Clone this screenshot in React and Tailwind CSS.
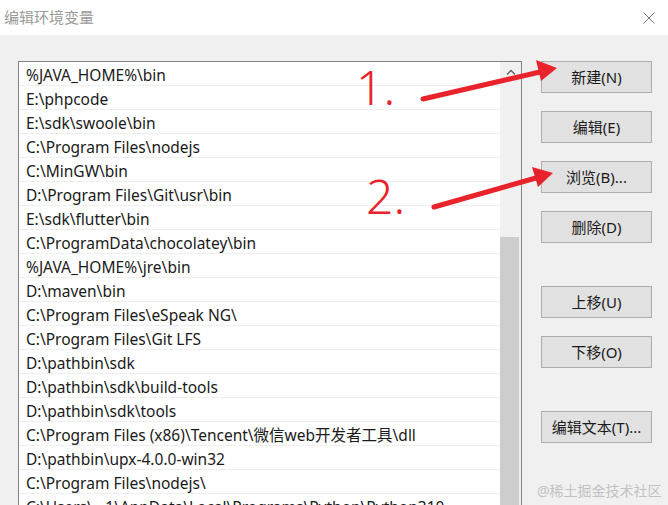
import React from "react";

const paths = [
    "%JAVA_HOME%\\bin",
    "E:\\phpcode",
    "E:\\sdk\\swoole\\bin",
    "C:\\Program Files\\nodejs",
    "C:\\MinGW\\bin",
    "D:\\Program Files\\Git\\usr\\bin",
    "E:\\sdk\\flutter\\bin",
    "C:\\ProgramData\\chocolatey\\bin",
    "%JAVA_HOME%\\jre\\bin",
    "D:\\maven\\bin",
    "C:\\Program Files\\eSpeak NG\\",
    "C:\\Program Files\\Git LFS",
    "D:\\pathbin\\sdk",
    "D:\\pathbin\\sdk\\build-tools",
    "D:\\pathbin\\sdk\\tools",
    "C:\\Program Files (x86)\\Tencent\\微信web开发者工具\\dll",
    "D:\\pathbin\\upx-4.0.0-win32",
    "C:\\Program Files\\nodejs\\",
    "C:\\Users\\...1\\AppData\\Local\\Programs\\Python\\Python310",
];

// buttons with their top margin (gap above each)
const buttons = [
    { label: "新建(N)", mt: "mt-0" },
    { label: "编辑(E)", mt: "mt-[18px]" },
    { label: "浏览(B)...", mt: "mt-[18px]" },
    { label: "删除(D)", mt: "mt-[18px]" },
    { label: "上移(U)", mt: "mt-[43px]" },
    { label: "下移(O)", mt: "mt-[18px]" },
    { label: "编辑文本(T)...", mt: "mt-[43px]" },
];

const font = { fontFamily: '"Noto Sans", "Noto Sans CJK SC", sans-serif' };

const WinButton = ({ label, mt }) => (
    <button
        className={`${mt} w-[111px] h-[32px] bg-[#e1e1e1] border border-[#adadad] text-[15px] text-[#1a1a1a] flex items-center justify-center leading-none`}
    >
        {label}
    </button>
);

const App = () => {
    return (
        <div className="relative w-[668px] h-[505px] overflow-hidden bg-[#f0f0f0]" style={font}>
            {/* title bar */}
            <div className="h-[35px] bg-white flex items-center justify-between pl-[4px] pr-[13px]">
                <span className="text-[15px] text-[#9a9a9a] leading-none">编辑环境变量</span>
                <svg width="12" height="12" viewBox="0 0 12 12">
                    <path d="M0.5 0.5 L11.5 11.5 M11.5 0.5 L0.5 11.5" stroke="#7a7a7a" strokeWidth="1" fill="none" />
                </svg>
            </div>

            <div className="flex pl-[18px] pt-[26px]">
                {/* list box */}
                <div className="w-[504px] border border-[#828282] bg-white flex">
                    <div className="w-[481px]">
                        {paths.map((p, i) => (
                            <div
                                key={i}
                                className="h-[24px] border-b border-[#efefef] pl-[7px] pt-[4px] flex items-center text-[15.5px] text-[#1a1a1a] whitespace-nowrap overflow-hidden"
                            >
                                {p}
                            </div>
                        ))}
                    </div>
                    {/* scrollbar */}
                    <div className="w-[21px] bg-[#f0f0f0] flex flex-col">
                        <div className="h-[20px] flex items-center justify-center">
                            <svg width="10" height="6" viewBox="0 0 10 6">
                                <path d="M1 5.5 L5 1.5 L9 5.5" stroke="#606060" strokeWidth="1.3" fill="none" />
                            </svg>
                        </div>
                        <div className="mt-[155px] w-[19px] h-[300px] bg-[#cdcdcd]" />
                    </div>
                </div>

                {/* buttons */}
                <div className="ml-[19px] flex flex-col">
                    {buttons.map((b) => (
                        <WinButton key={b.label} label={b.label} mt={b.mt} />
                    ))}
                </div>
            </div>

            {/* red annotations */}
            <span className="absolute left-[356px] top-[63px] text-[48px] text-[#e8232b] leading-none font-light">1.</span>
            <span className="absolute left-[366px] top-[172px] text-[48px] text-[#e8232b] leading-none font-light">2.</span>
            <svg className="absolute left-0 top-0" width="668" height="505" viewBox="0 0 668 505">
                <path d="M423 99 L540 72" stroke="#e8232b" strokeWidth="5" strokeLinecap="round" />
                <path d="M557 68 L536 60 L541 81 Z" fill="#e8232b" />
                <path d="M434 207 L536 178" stroke="#e8232b" strokeWidth="5" strokeLinecap="round" />
                <path d="M553 173 L532 167 L538 187 Z" fill="#e8232b" />
            </svg>

            {/* watermark */}
            <span className="absolute left-[537px] top-[484px] text-[14px] text-[#c2c2c2] leading-none">@稀土掘金技术社区</span>
        </div>
    );
};

export default App;
